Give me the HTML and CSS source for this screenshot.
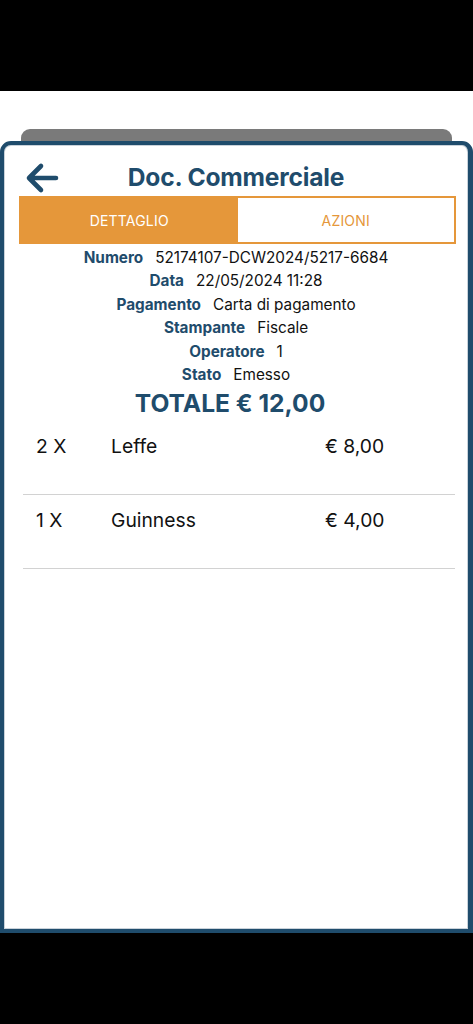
FILE: index.html
```html
<!DOCTYPE html>
<html lang="it">
<head>
<meta charset="utf-8">
<title>Doc. Commerciale</title>
<link rel="stylesheet" href="styles.css">
</head>
<body>
<div class="status"></div>
<div class="stage">
  <div class="sheet-tab"></div>
  <div class="card">
    <div class="header">
      <svg class="back" width="34" height="32" viewBox="0 0 34 32" aria-hidden="true">
        <path d="M31 16 H5 M16 4 L4 16 L16 28" fill="none" stroke="#1f4c6c" stroke-width="4.6" stroke-linecap="round" stroke-linejoin="round"/>
      </svg>
      <h1 class="title">Doc. Commerciale</h1>
    </div>
    <div class="tabs">
      <div class="tab active">DETTAGLIO</div>
      <div class="tab">AZIONI</div>
    </div>
    <div class="info">
      <div class="row"><span class="lbl">Numero</span><span class="val">52174107-DCW2024/5217-6684</span></div>
      <div class="row"><span class="lbl">Data</span><span class="val">22/05/2024 11:28</span></div>
      <div class="row"><span class="lbl">Pagamento</span><span class="val">Carta di pagamento</span></div>
      <div class="row"><span class="lbl">Stampante</span><span class="val">Fiscale</span></div>
      <div class="row"><span class="lbl">Operatore</span><span class="val">1</span></div>
      <div class="row"><span class="lbl">Stato</span><span class="val">Emesso</span></div>
      <div class="total">TOTALE € 12,00</div>
    </div>
    <div class="items">
      <div class="item"><span class="qty">2 X</span><span class="name">Leffe</span><span class="price">€ 8,00</span></div>
      <div class="item"><span class="qty">1 X</span><span class="name">Guinness</span><span class="price">€ 4,00</span></div>
    </div>
  </div>
</div>
</body>
</html>
```
FILE: styles.css
```css
html, body {
  margin: 0;
  padding: 0;
  background: #000;
  font-family: Inter, "Liberation Sans", sans-serif;
}
.status {
  height: 91px;
  background: #000;
}
.stage {
  background: #fff;
  padding-top: 38px;
}
.sheet-tab {
  height: 12px;
  margin: 0 21px 0 21px;
  background: #7a7a7a;
  border-radius: 9px 9px 0 0;
}
.card {
  height: 784px;
  border: 4px solid #1f4c6c;
  border-right-width: 5px;
  border-radius: 11px 11px 0 0;
  background: #fff;
  box-shadow: inset 0 0 0 1px #c9d2da;
}
.header {
  height: 51px;
  position: relative;
  display: flex;
  align-items: center;
  justify-content: center;
}
.back {
  position: absolute;
  left: 21px;
  top: 17px;
}
.title {
  margin: 0;
  margin-top: 13px;
  font-size: 24.6px;
  font-weight: 700;
  color: #1f4c6c;
  letter-spacing: -0.2px;
}
.tabs {
  display: flex;
  margin: 0 12px 0 15px;
  height: 48px;
  border: 2px solid #e5973a;
  box-sizing: border-box;
}
.tab {
  flex: 1;
  display: flex;
  align-items: center;
  justify-content: center;
  font-size: 14px;
  color: #e5973a;
  background: #fff;
  letter-spacing: 0.2px;
}
.tab.active {
  background: #e5973a;
  color: #fff;
}
.info {
  margin-top: 2px;
  text-align: center;
}
.row {
  line-height: 23.4px;
  font-size: 15.3px;
}
.lbl {
  font-weight: 700;
  color: #1f4c6c;
  margin-right: 12px;
}
.val {
  color: #111;
}
.total {
  font-size: 24.6px;
  font-weight: 700;
  color: #1f4c6c;
  line-height: 35px;
  padding-right: 12px;
}
.items {
  margin: 0 13px 0 19px;
}
.item {
  display: grid;
  grid-template-columns: 75px 214px auto;
  padding: 13px 0 0 13px;
  height: 74px;
  box-sizing: border-box;
  border-bottom: 1.5px solid #d2d2d2;
  font-size: 19.3px;
  line-height: 24px;
  color: #111;
}
```
